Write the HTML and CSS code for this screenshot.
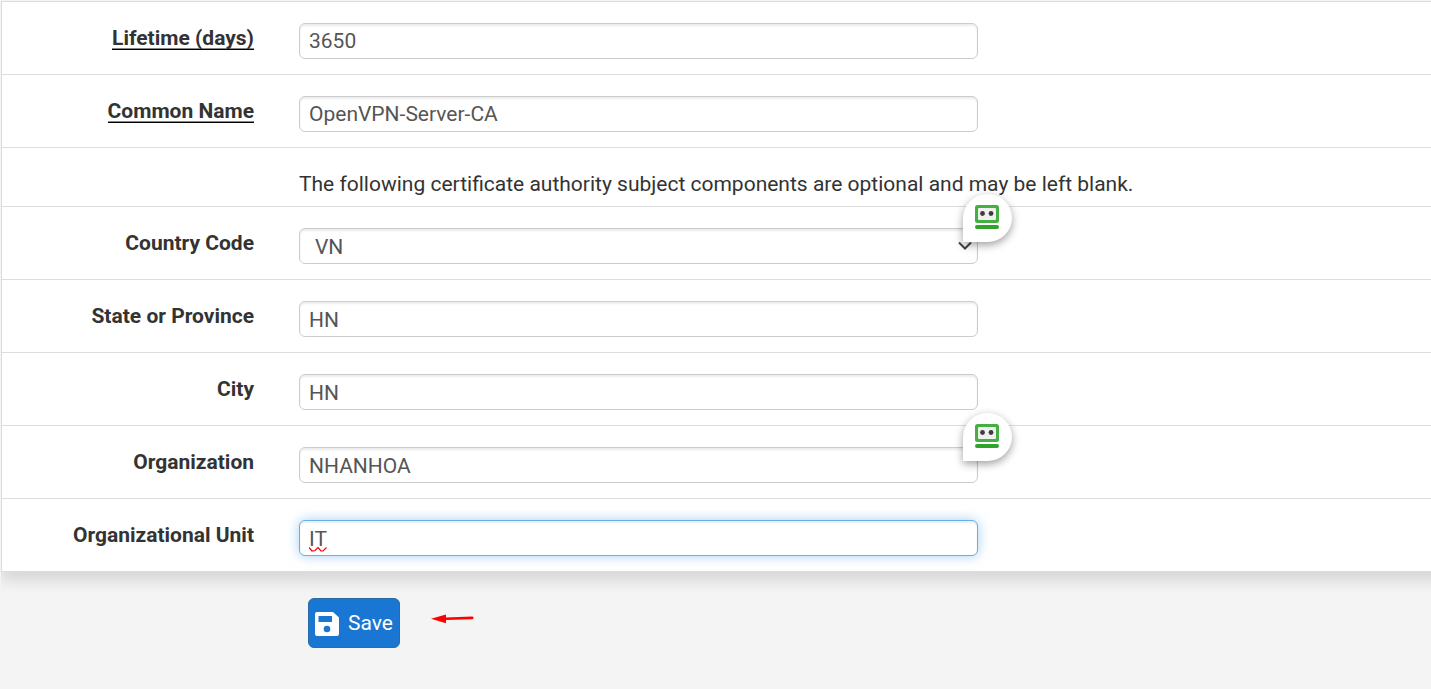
FILE: index.html
```html
<!DOCTYPE html>
<html lang="en">
<head>
<meta charset="utf-8">
<title>Certificate Authority</title>
<link rel="stylesheet" href="styles.css">
</head>
<body>
<form class="panel">
  <div class="row"><label class="label"><span class="required">Lifetime (days)</span></label><div class="field raised">3650</div></div>
  <div class="row"><label class="label"><span class="required">Common Name</span></label><div class="field raised">OpenVPN-Server-CA</div></div>
  <div class="row note"><span class="label"></span><p class="help">The following certificate authority subject components are optional and may be left blank.</p></div>
  <div class="row"><label class="label"><span>Country Code</span></label><div class="field select">VN
    <svg class="chevron" width="14" height="10" viewBox="0 0 14 10"><path d="M1 1.500 7 7.500 13 1.500" fill="none" stroke="#444" stroke-width="2"/></svg>
    <span class="badge"><svg width="24" height="24" viewBox="0 0 24 24"><rect width="24" height="18" rx="2.5" fill="#45b03f"/><rect x="3" y="3" width="18" height="12" rx="1" fill="#f0f0f0"/><circle cx="7.5" cy="8.5" r="2.4" fill="#3c3c42"/><circle cx="16" cy="8.5" r="2.4" fill="#3c3c42"/><rect y="20" width="24" height="4" rx="2" fill="#2fa32b"/></svg></span></div></div>
  <div class="row"><label class="label"><span>State or Province</span></label><div class="field">HN</div></div>
  <div class="row"><label class="label"><span>City</span></label><div class="field">HN</div></div>
  <div class="row"><label class="label"><span>Organization</span></label><div class="field">NHANHOA
    <span class="badge"><svg width="24" height="24" viewBox="0 0 24 24"><rect width="24" height="18" rx="2.5" fill="#45b03f"/><rect x="3" y="3" width="18" height="12" rx="1" fill="#f0f0f0"/><circle cx="7.5" cy="8.5" r="2.4" fill="#3c3c42"/><circle cx="16" cy="8.5" r="2.4" fill="#3c3c42"/><rect y="20" width="24" height="4" rx="2" fill="#2fa32b"/></svg></span></div></div>
  <div class="row"><label class="label"><span>Organizational Unit</span></label><div class="field focused">IT
    <svg class="squiggle" width="18" height="5" viewBox="0 0 18 5"><path d="M0 .5 3 4 6 3.500 9 .5 12 4 14 4 17.500 .5" fill="none" stroke="red" stroke-width="1.2"/></svg></div></div>
</form>
<div class="actions">
  <button class="save" type="button"><svg width="24" height="24" viewBox="0 0 24 24"><path fill="#fff" fill-rule="evenodd" d="M2 0H18L24 5.500V22Q24 24 22 24H2Q0 24 0 22V2Q0 0 2 0ZM3.500 4V10H17V4ZM12 13.700A3.300 3.300 0 1 0 12 20.300A3.300 3.300 0 1 0 12 13.700Z"/></svg><span>Save</span></button>
  <svg class="arrow" width="43" height="10" viewBox="0 0 43 10"><path d="M0 4.800 15 .5V3.400L41 2.600Q42.500 2.600 42.500 4T41 5.300L15 6.100V9.200Z" fill="red"/></svg>
</div>
</body>
</html>
```
FILE: styles.css
```css
* { box-sizing: border-box; }
body {
  margin: 0;
  padding: 1px 0 0 1px;
  height: 689px;
  overflow: hidden;
  background: #f4f4f4;
  color: #333;
  font: 21px/30px Roboto, sans-serif;
}
.panel {
  margin-right: -24px;
  background: #fff;
  border: solid #dcdcdc;
  border-width: 1px 0 0 1px;
  box-shadow: 0 8px 14px rgba(0, 0, 0, .13);
  clip-path: inset(0 0 -30px 0);
}
.row {
  display: flex;
  height: 73px;
  border-bottom: 1px solid #dedede;
}
.label {
  width: 252px;
  margin-right: 45px;
  padding-top: 21px;
  text-align: right;
  font-weight: bold;
  white-space: nowrap;
}
.required {
  display: inline-block;
  height: 27px;
  background: linear-gradient(#888 50%, #000 50%) bottom / 100% 2px no-repeat;
}
.field {
  position: relative;
  width: 679px;
  height: 36px;
  margin-top: 21px;
  padding: 3px 9px;
  border: 1px solid #ccc;
  border-radius: 6px;
  background: #fff;
  box-shadow: inset 0 2px 2px rgba(0, 0, 0, .075);
  color: #555;
}
.raised { padding-top: 2px; }
.select { padding-left: 15px; }
.note { height: 59px; }
.help { margin: 21px 0 0; white-space: nowrap; }
.focused {
  border-color: #66afe9;
  box-shadow: inset 0 2px 2px rgba(0, 0, 0, .075), 0 0 12px rgba(102, 175, 233, .6);
}
.chevron { position: absolute; top: 12px; right: 5px; }
.badge {
  position: absolute;
  z-index: 1;
  top: -35px;
  right: -35px;
  width: 49px;
  height: 48px;
  padding: 11px 12px;
  border-radius: 50% 50% 50% 0;
  background: #fff;
  box-shadow: 0 3px 8px rgba(0, 0, 0, .38);
}
.badge svg { display: block; }
.squiggle { position: absolute; top: 26px; left: 9px; }
.actions {
  display: flex;
  align-items: flex-start;
  padding: 26px 0 0 307px;
}
.save {
  display: flex;
  align-items: center;
  gap: 9px;
  width: 92px;
  height: 50px;
  padding: 0 6px;
  border: 1px solid #2a6ca8;
  border-radius: 6px;
  background: #1976d2;
  color: #fff;
  font: inherit;
}
.save svg { flex: none; margin-top: 2px; }
.arrow { margin: 16px 0 0 31px; }
```
